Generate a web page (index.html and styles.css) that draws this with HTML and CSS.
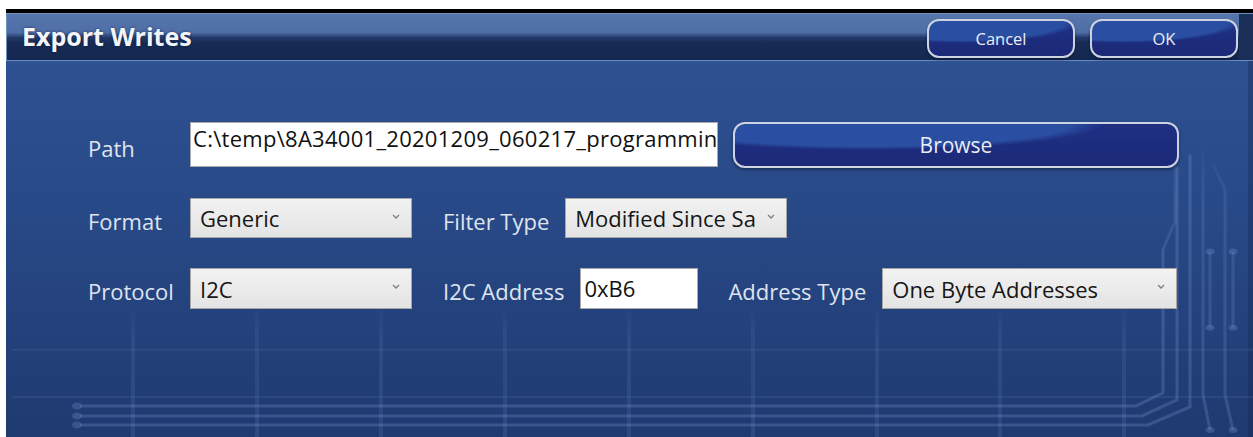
FILE: index.html
```html
<!DOCTYPE html>
<html lang="en">
<head>
<meta charset="utf-8">
<title>Export Writes</title>
<link rel="stylesheet" href="styles.css">
</head>
<body>
<div class="window">
  <header class="titlebar">
    <h1 class="title">Export Writes</h1>
    <div class="actions">
      <button class="btn btn-small" type="button">Cancel</button>
      <button class="btn btn-small" type="button">OK</button>
    </div>
  </header>

  <main class="content">
    <!-- circuit-board artwork behind the form -->
    <svg class="circuit" viewBox="6 62 1247 375" preserveAspectRatio="none" aria-hidden="true">
      <defs>
        <linearGradient id="colFade" gradientUnits="userSpaceOnUse" x1="0" y1="305" x2="0" y2="437">
          <stop offset="0" stop-color="#7393d0" stop-opacity="0"/>
          <stop offset="0.25" stop-color="#7393d0" stop-opacity="0.13"/>
          <stop offset="1" stop-color="#7393d0" stop-opacity="0.17"/>
        </linearGradient>
        <linearGradient id="railFade" gradientUnits="userSpaceOnUse" x1="0" y1="140" x2="0" y2="437">
          <stop offset="0" stop-color="#7b9ad4" stop-opacity="0"/>
          <stop offset="0.2" stop-color="#7b9ad4" stop-opacity="0.18"/>
          <stop offset="1" stop-color="#7b9ad4" stop-opacity="0.26"/>
        </linearGradient>
      </defs>

      <g stroke="url(#colFade)" stroke-width="4">
        <line x1="133" y1="305" x2="133" y2="437"/>
        <line x1="257" y1="305" x2="257" y2="437"/>
        <line x1="381" y1="305" x2="381" y2="437"/>
        <line x1="505" y1="305" x2="505" y2="437"/>
        <line x1="629" y1="305" x2="629" y2="437"/>
        <line x1="753" y1="305" x2="753" y2="437"/>
        <line x1="877" y1="305" x2="877" y2="437"/>
        <line x1="1000" y1="305" x2="1000" y2="437"/>
        <line x1="1124" y1="305" x2="1124" y2="437"/>
      </g>

      <g stroke="#7393d0" stroke-opacity="0.14" stroke-width="2">
        <line x1="12" y1="350" x2="1253" y2="350"/>
        <line x1="12" y1="397" x2="1253" y2="397"/>
      </g>

      <g fill="none" stroke="#7b9ad4" stroke-opacity="0.28" stroke-width="3">
        <path d="M80 406 H1136 L1163 393 V250"/>
        <path d="M80 416 H1142 L1177 400 V168"/>
        <path d="M80 425 H1148 L1190 407 V155"/>
      </g>

      <g fill="none" stroke="url(#railFade)" stroke-width="3">
        <path d="M1163 250 L1175 222 V140"/>
        <path d="M1203 150 V395 L1210 430"/>
        <path d="M1213 165 L1225 190 V337"/>
        <path d="M1225 337 V395 L1233 430"/>
        <path d="M1210 252 V328"/>
        <path d="M1233 252 V328"/>
      </g>

      <g fill="#7b9ad4" fill-opacity="0.28">
        <ellipse cx="77" cy="406" rx="5" ry="3.5"/>
        <ellipse cx="77" cy="416" rx="5" ry="3.5"/>
        <ellipse cx="77" cy="425" rx="5" ry="3.5"/>
        <ellipse cx="1210" cy="252" rx="4.5" ry="3"/>
        <ellipse cx="1233" cy="252" rx="4.5" ry="3"/>
        <ellipse cx="1210" cy="328" rx="4.5" ry="3"/>
        <ellipse cx="1233" cy="328" rx="4.5" ry="3"/>
        <ellipse cx="1210" cy="430" rx="4.5" ry="3"/>
        <ellipse cx="1233" cy="430" rx="4.5" ry="3"/>
      </g>
    </svg>

    <div class="row row-path">
      <label class="label">Path</label>
      <div class="textbox textbox-path">C:\temp\8A34001_20201209_060217_programming.txt</div>
      <button class="btn btn-browse" type="button">Browse</button>
    </div>

    <div class="row row-select">
      <label class="label">Format</label>
      <div class="combo combo-std">
        <span class="combo-text">Generic</span>
        <svg class="chev" viewBox="0 0 8 5" aria-hidden="true"><polyline points="1,1 4,4 7,1"/></svg>
      </div>
      <label class="label label-mid">Filter Type</label>
      <div class="combo combo-std">
        <span class="combo-text">Modified Since Save</span>
        <svg class="chev" viewBox="0 0 8 5" aria-hidden="true"><polyline points="1,1 4,4 7,1"/></svg>
      </div>
    </div>

    <div class="row row-select row-last">
      <label class="label">Protocol</label>
      <div class="combo combo-std">
        <span class="combo-text">I2C</span>
        <svg class="chev" viewBox="0 0 8 5" aria-hidden="true"><polyline points="1,1 4,4 7,1"/></svg>
      </div>
      <label class="label label-mid">I2C Address</label>
      <div class="textbox textbox-addr">0xB6</div>
      <label class="label label-mid label-type">Address Type</label>
      <div class="combo combo-wide">
        <span class="combo-text">One Byte Addresses</span>
        <svg class="chev" viewBox="0 0 8 5" aria-hidden="true"><polyline points="1,1 4,4 7,1"/></svg>
      </div>
    </div>
  </main>
</div>
</body>
</html>
```

FILE: styles.css
```css
* {
  box-sizing: border-box;
}

html,
body {
  margin: 0;
  height: 100%;
  overflow: hidden;
}

body {
  background: #ffffff;
  font-family: "Open Sans", "Noto Sans", "Liberation Sans", sans-serif;
}

.window {
  margin: 9px 0 0 6px;
  height: 428px;
  border-top: 4px solid #000000;
  display: flex;
  flex-direction: column;
}

/* ---------- title bar ---------- */

.titlebar {
  flex: 0 0 48px;
  display: flex;
  align-items: center;
  justify-content: space-between;
  border-top: 1px solid #7190c4;
  border-left: 1px solid #7190c4;
  border-bottom: 1px solid #6c8bc0;
  background:
    linear-gradient(to right, rgba(0, 0, 0, 0) calc(100% - 14px), #1b3059 calc(100% - 14px)),
    linear-gradient(to bottom, #5675ad 0%, #4f6fa7 40%, #23396a 51%, #172c55 62%, #132750 100%);
}

.title {
  margin: -2px 0 0 15px;
  font-size: 25px;
  font-weight: 700;
  color: #f3f5f9;
  text-shadow: 0 0 3px rgba(10, 20, 50, 0.6);
}

.actions {
  display: flex;
  gap: 15px;
  margin: 3px 15px 0 0;
}

/* ---------- glossy buttons ---------- */

.btn {
  font-family: inherit;
  color: #e9edf6;
  border: 2px solid #cdd3e0;
  border-radius: 12px;
  background:
    radial-gradient(ellipse 125% 95% at 22% 0%, #2a4fa2 58%, rgba(42, 79, 162, 0) 66%),
    linear-gradient(to bottom, #1f3084 0%, #1b2977 100%);
  box-shadow: 0 2px 3px rgba(5, 15, 40, 0.45);
  cursor: pointer;
  padding: 0;
}

.btn-small {
  width: 148px;
  height: 39px;
  font-size: 16.5px;
}

.btn-browse {
  width: 446px;
  height: 46px;
  margin-left: 15px;
  font-size: 21px;
  background:
    radial-gradient(ellipse 95% 110% at 30% 0%, #2a4fa2 48%, rgba(42, 79, 162, 0) 56%),
    linear-gradient(to bottom, #1f3084 0%, #1b2977 100%);
}

/* ---------- form area ---------- */

.content {
  flex: 1;
  position: relative;
  display: flex;
  flex-direction: column;
  gap: 30px;
  padding: 61px 0 0 82px;
  background: linear-gradient(to bottom, #2e5192 0%, #284987 40%, #1f3a70 100%);
  box-shadow: inset -5px 0 0 rgba(20, 40, 80, 0.35);
}

.circuit {
  position: absolute;
  left: 0;
  top: 0;
  width: 100%;
  height: 100%;
  z-index: 0;
}

.row {
  position: relative;
  z-index: 1;
  display: flex;
  align-items: center;
}

.row-path {
  height: 46px;
}

.row-select {
  height: 40px;
}

.row-last {
  height: 41px;
}

.label {
  flex: 0 0 auto;
  width: 102px;
  padding-top: 5px;
  font-size: 22px;
  color: #dfe4ee;
  white-space: nowrap;
}

.label-mid {
  width: auto;
  margin-left: 31px;
  margin-right: 16px;
}

.label-type {
  margin-left: 30px;
}

/* text boxes */

.textbox {
  flex: 0 0 auto;
  background: #ffffff;
  border: 1px solid #a9a9a9;
  font-size: 22px;
  color: #111111;
  white-space: nowrap;
  overflow: hidden;
  line-height: 30px;
}

.textbox-path {
  align-self: flex-start;
  width: 528px;
  height: 45px;
  padding: 0 0 0 2px;
  letter-spacing: 0.28px;
}

.textbox-addr {
  width: 118px;
  height: 41px;
  padding: 4px 0 0 3px;
}

/* combo boxes */

.combo {
  flex: 0 0 auto;
  position: relative;
  height: 40px;
  display: flex;
  align-items: center;
  padding: 0 31px 0 9px;
  background: linear-gradient(to bottom, #f2f2f2 0%, #ebebeb 50%, #e3e3e3 100%);
  border: 1px solid #a6a6a6;
  font-size: 22px;
  color: #161616;
  overflow: hidden;
}

.row-last .combo {
  height: 41px;
}

.combo-std {
  width: 222px;
}

.combo-wide {
  width: 295px;
}

.combo-text {
  display: block;
  overflow: hidden;
  white-space: nowrap;
  line-height: 30px;
}

.chev {
  position: absolute;
  right: 11px;
  top: 15px;
  width: 8px;
  height: 5px;
  fill: none;
  stroke: #7d7d7d;
  stroke-width: 1.3;
}
```
